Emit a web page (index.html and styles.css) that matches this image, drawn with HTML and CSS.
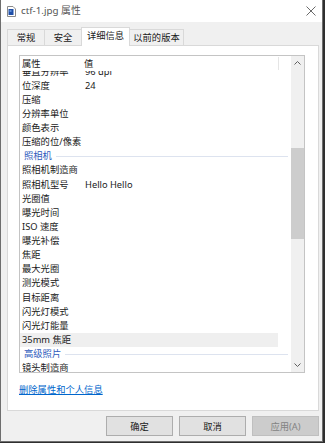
FILE: index.html
```html
<!DOCTYPE html>
<html lang="zh-CN">
<head>
<meta charset="utf-8">
<title>ctf-1.jpg 属性</title>
<link rel="stylesheet" href="styles.css">
</head>
<body>
<div class="dialog">
  <div class="titlebar">
    <svg class="file-icon" width="9" height="11" viewBox="0 0 9 11">
      <path d="M0.5 0.5 H6 L8.5 3 V10.5 H0.5 Z" fill="#ffffff" stroke="#8a8a8a" stroke-width="1"/>
      <rect x="1.5" y="3" width="5" height="6" fill="#1f4fa8"/>
      <rect x="2.5" y="4" width="2" height="2" fill="#5f8fd8"/>
    </svg>
    <span class="title">ctf-1.jpg 属性</span>
    <svg class="close" width="10" height="10" viewBox="0 0 10 10">
      <path d="M0.5 0.5 L9.5 9.5 M9.5 0.5 L0.5 9.5" stroke="#6a6a6a" stroke-width="1" fill="none"/>
    </svg>
  </div>

  <div class="tabs">
    <div class="tab tab-general">常规</div>
    <div class="tab tab-security">安全</div>
    <div class="tab tab-details active">详细信息</div>
    <div class="tab tab-prev">以前的版本</div>
  </div>

  <div class="panel">
    <div class="listbox">
      <div class="list">
        <div class="header">
          <span class="name">属性</span>
          <span class="val">值</span>
          <span class="col-sep"></span>
        </div>
        <div class="body">
          <div class="rows">
            <div class="row first"><span class="name">垂直分辨率</span><span class="val">96 dpi</span></div>
            <div class="row"><span class="name">位深度</span><span class="val">24</span></div>
            <div class="row"><span class="name">压缩</span></div>
            <div class="row"><span class="name">分辨率单位</span></div>
            <div class="row"><span class="name">颜色表示</span></div>
            <div class="row"><span class="name">压缩的位/像素</span></div>
            <div class="row group"><span class="gname">照相机</span><span class="rule"></span></div>
            <div class="row"><span class="name">照相机制造商</span></div>
            <div class="row"><span class="name">照相机型号</span><span class="val">Hello Hello</span></div>
            <div class="row"><span class="name">光圈值</span></div>
            <div class="row"><span class="name">曝光时间</span></div>
            <div class="row"><span class="name">ISO 速度</span></div>
            <div class="row"><span class="name">曝光补偿</span></div>
            <div class="row"><span class="name">焦距</span></div>
            <div class="row"><span class="name">最大光圈</span></div>
            <div class="row"><span class="name">测光模式</span></div>
            <div class="row"><span class="name">目标距离</span></div>
            <div class="row"><span class="name">闪光灯模式</span></div>
            <div class="row"><span class="name">闪光灯能量</span></div>
            <div class="row hover"><span class="name">35mm 焦距</span></div>
            <div class="row group"><span class="gname">高级照片</span><span class="rule"></span></div>
            <div class="row"><span class="name">镜头制造商</span></div>
          </div>
        </div>
      </div>
      <div class="scrollbar">
        <div class="arrow">
          <svg width="7" height="4" viewBox="0 0 7 4"><path d="M0.5 3.5 L3.5 0.5 L6.5 3.5" stroke="#606060" stroke-width="1" fill="none"/></svg>
        </div>
        <div class="track">
          <div class="thumb" style="margin-top: 78px; height: 91px;"></div>
        </div>
        <div class="arrow">
          <svg width="7" height="4" viewBox="0 0 7 4"><path d="M0.5 0.5 L3.5 3.5 L6.5 0.5" stroke="#606060" stroke-width="1" fill="none"/></svg>
        </div>
      </div>
    </div>
    <a class="link" href="#">删除属性和个人信息</a>
  </div>

  <div class="buttons">
    <button class="btn">确定</button>
    <button class="btn">取消</button>
    <button class="btn disabled">应用(A)</button>
  </div>
</div>
</body>
</html>
```

FILE: styles.css
```css
* {
  box-sizing: border-box;
}

html, body {
  margin: 0;
  padding: 0;
}

body {
  background: #2f2f2f;
  width: 325px;
  height: 443px;
  overflow: hidden;
  font-family: "Noto Sans", "Noto Sans CJK SC", sans-serif;
  font-size: 9.3px;
  color: #1a1a1a;
}

.dialog {
  width: 323px;
  height: 442px;
  background: #f0f0f0;
  border-left: 1px solid #6e6e6e;
  border-right: 1px solid #6e6e6e;
  border-bottom: 1px solid #6e6e6e;
  display: flex;
  flex-direction: column;
}

/* title bar */
.titlebar {
  height: 22px;
  background: #ffffff;
  display: flex;
  align-items: center;
  padding-left: 6px;
  padding-right: 6px;
}

.file-icon {
  display: block;
  flex: none;
}

.title {
  margin-left: 5px;
  font-size: 9.8px;
  color: #555555;
  flex: 1;
  line-height: 22px;
}

.close {
  display: block;
  flex: none;
}

/* tabs */
.tabs {
  height: 23px;
  display: flex;
  align-items: flex-end;
  padding-left: 6px;
}

.tab {
  height: 16px;
  border: 1px solid #d9d9d9;
  border-bottom: none;
  background: #f0f0f0;
  display: flex;
  align-items: center;
  justify-content: center;
  margin-left: -1px;
  line-height: 14px;
  color: #1a1a1a;
}

.tab-general {
  margin-left: 0;
  width: 38px;
}

.tab-security {
  width: 38px;
}

.tab-details {
  width: 49px;
}

.tab-prev {
  width: 55px;
}

.tab.active {
  height: 19px;
  background: #ffffff;
  margin-bottom: -1px;
  position: relative;
  z-index: 1;
  padding-bottom: 3px;
}

/* panel */
.panel {
  margin-left: 6px;
  width: 312px;
  height: 366px;
  background: #ffffff;
  border: 1px solid #d9d9d9;
  padding: 9px 0 0 11px;
  display: flex;
  flex-direction: column;
}

.listbox {
  width: 286px;
  height: 318px;
  border: 1px solid #c4c4c4;
  display: flex;
  flex: none;
}

.list {
  flex: 1;
  display: flex;
  flex-direction: column;
  overflow: hidden;
  min-width: 0;
}

.header {
  height: 14.5px;
  flex: none;
  display: flex;
  align-items: center;
  position: relative;
  background: #ffffff;
}

.header .name,
.row .name {
  width: 65px;
  padding-left: 2px;
  white-space: nowrap;
  flex: none;
}

.header .val,
.row .val {
  white-space: nowrap;
}

.header .val {
  margin-left: -1px;
}

.col-sep {
  position: absolute;
  left: 258px;
  top: 1px;
  width: 1px;
  height: 13px;
  background: #e5e5e5;
}

.body {
  flex: 1;
  overflow: hidden;
}

.rows {
  display: flex;
  flex-direction: column;
}

.row {
  height: 14.13px;
  line-height: 14.13px;
  display: flex;
  align-items: center;
  white-space: nowrap;
  margin-right: 13px;
}

.row.first {
  margin-top: -6px;
}

.row.hover {
  background: #efefef;
}

.row.group {
  margin-right: 3px;
}

.gname {
  padding-left: 4px;
  color: #2f5bbd;
  flex: none;
}

.rule {
  flex: 1;
  height: 1px;
  background: #dde3ef;
  margin-left: 4px;
}

/* scrollbar */
.scrollbar {
  width: 13px;
  flex: none;
  background: #f0f0f0;
  display: flex;
  flex-direction: column;
}

.arrow {
  height: 14px;
  flex: none;
  display: flex;
  align-items: center;
  justify-content: center;
}

.arrow svg {
  display: block;
}

.track {
  flex: 1;
  display: flex;
  flex-direction: column;
}

.thumb {
  background: #cdcdcd;
  flex: none;
}

.link {
  margin-top: 10px;
  line-height: 14px;
  color: #0066cc;
  text-decoration: underline;
  align-self: flex-start;
}

/* buttons */
.buttons {
  margin-top: 5px;
  display: flex;
  justify-content: flex-end;
  gap: 6px;
  padding-right: 3px;
}

.btn {
  width: 67px;
  height: 20px;
  background: #e1e1e1;
  border: 1px solid #adadad;
  font-family: "Noto Sans", "Noto Sans CJK SC", sans-serif;
  font-size: 9.3px;
  color: #1a1a1a;
  padding: 0;
  margin: 0;
}

.btn.disabled {
  background: #cccccc;
  border-color: #bfbfbf;
  color: #838383;
}
```
